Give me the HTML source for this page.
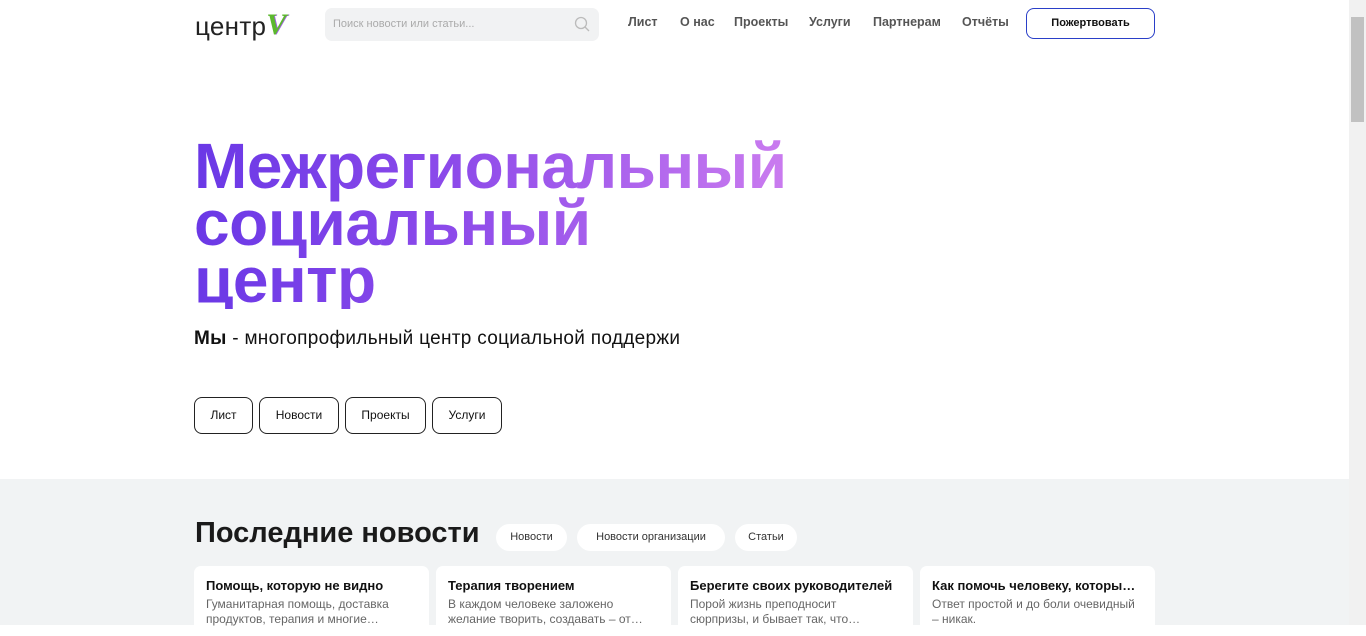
<!DOCTYPE html><html><head><meta charset="utf-8"><style>
*{box-sizing:border-box;margin:0;padding:0}
body{width:1366px;height:625px;overflow:hidden;font-family:"Liberation Sans",sans-serif;background:#fff;position:relative;color:#111}
.sb{position:absolute;right:0;top:0;width:17px;height:625px;background:#f1f1f1}
.sb i{position:absolute;left:2px;top:17px;width:13px;height:105px;background:#c1c1c1}
.hdr{position:absolute;top:0;left:0;width:1349px;height:46px}
.logo{position:absolute;left:195px;top:9px;font-size:26px;color:#222;letter-spacing:0.3px}
.logo b{color:#5cb82e;font-family:"Liberation Serif",serif;font-style:italic;font-size:30px;text-shadow:1px 0 #a060e0;position:relative;top:-1px}
.search{position:absolute;left:325px;top:8px;width:274px;height:33px;background:#f1f2f3;border-radius:7px;font-size:11px;color:#aaa;padding:10px 8px}
.search svg{position:absolute;right:9px;top:8px}
.nav{position:absolute;top:15px;font-size:12.5px;font-weight:bold;color:#555}
.don{position:absolute;left:1026px;top:8px;width:129px;height:31px;border:1.5px solid #2a3fc8;border-radius:8px;font-size:11px;font-weight:bold;text-align:center;line-height:28px;color:#111}
h1{position:absolute;left:194px;top:138px;font-size:64px;line-height:57px;font-weight:bold;background:linear-gradient(90deg,#6a38e6 0%,#8c4aea 40%,#d382f0 100%);-webkit-background-clip:text;background-clip:text;color:transparent;width:640px;letter-spacing:-0.5px;white-space:nowrap}
.sub{position:absolute;left:194px;top:328px;font-size:19px;color:#111;letter-spacing:0.3px}
.btn{position:absolute;top:397px;height:37px;border:1px solid #222;border-radius:8px;font-size:12px;line-height:35px;text-align:center}
.gray{position:absolute;top:479px;left:0;width:1349px;height:146px;background:#f1f3f4}
h2{position:absolute;left:195px;top:517px;font-size:29px;font-weight:bold;color:#1a1a1a}
.pill{position:absolute;top:524px;height:27px;background:#fff;border-radius:14px;font-size:11px;line-height:27px;text-align:center;color:#333}
.card{position:absolute;top:566px;width:235px;height:70px;background:#fff;border-radius:7px;padding:12px 12px}
.card h3{font-size:13px;font-weight:bold;color:#111;white-space:nowrap;overflow:hidden;text-overflow:ellipsis;margin-bottom:4px}
.card p{font-size:12px;color:#666;line-height:15px;width:205px;height:30px;overflow:hidden}
</style></head><body>
<div class="hdr">
<div class="logo">центр<b>V</b></div>
<div class="search">Поиск новости или статьи...<svg width="16" height="16" viewBox="0 0 16 16"><circle cx="7" cy="7" r="5.5" fill="none" stroke="#bbb" stroke-width="1.3"/><path d="M11 11l4 4" stroke="#bbb" stroke-width="1.3"/></svg></div>
<div class="nav" style="left:628px">Лист</div>
<div class="nav" style="left:680px">О нас</div>
<div class="nav" style="left:734px">Проекты</div>
<div class="nav" style="left:809px">Услуги</div>
<div class="nav" style="left:873px">Партнерам</div>
<div class="nav" style="left:962px">Отчёты</div>
<div class="don">Пожертвовать</div>
</div>
<h1>Межрегиональный<br>социальный<br>центр</h1>
<div class="sub"><b>Мы</b> - многопрофильный центр социальной поддержи</div>
<div class="btn" style="left:194px;width:59px">Лист</div>
<div class="btn" style="left:259px;width:80px">Новости</div>
<div class="btn" style="left:345px;width:81px">Проекты</div>
<div class="btn" style="left:432px;width:70px">Услуги</div>
<div class="gray"></div>
<h2>Последние новости</h2>
<div class="pill" style="left:496px;width:71px">Новости</div>
<div class="pill" style="left:577px;width:148px">Новости организации</div>
<div class="pill" style="left:735px;width:62px">Статьи</div>
<div class="card" style="left:194px"><h3>Помощь, которую не видно</h3><p>Гуманитарная помощь, доставка продуктов, терапия и многие…</p></div>
<div class="card" style="left:436px"><h3>Терапия творением</h3><p>В каждом человеке заложено желание творить, создавать – от…</p></div>
<div class="card" style="left:678px"><h3>Берегите своих руководителей</h3><p>Порой жизнь преподносит сюрпризы, и бывает так, что…</p></div>
<div class="card" style="left:920px"><h3>Как помочь человеку, которы…</h3><p>Ответ простой и до боли очевидный – никак.</p></div>
<div class="sb"><i></i></div>
</body></html>
